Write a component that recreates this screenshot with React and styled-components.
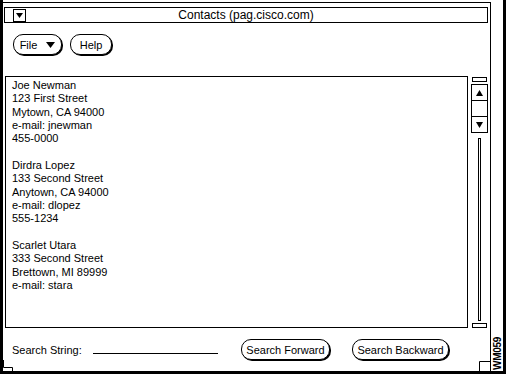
import styled, { createGlobalStyle } from "styled-components";

const GlobalStyle = createGlobalStyle`
  html, body {
    margin: 0;
    padding: 0;
    background: #fff;
  }
  body {
    font-family: "Liberation Sans", Arial, sans-serif;
    color: #000;
  }
`;

const contacts = [
  ["Joe Newman", "123 First Street", "Mytown, CA 94000", "e-mail: jnewman", "455-0000"],
  ["Dirdra Lopez", "133 Second Street", "Anytown, CA 94000", "e-mail: dlopez", "555-1234"],
  ["Scarlet Utara", "333 Second Street", "Brettown, MI 89999", "e-mail: stara"],
];

const Triangle = ({ w = 7, h = 4, up }) => (
  <svg width={w} height={h} viewBox={`0 0 ${w} ${h}`} style={{ display: "block" }}>
    <polygon
      points={up ? `${w / 2},0 ${w},${h} 0,${h}` : `0,0 ${w},0 ${w / 2},${h}`}
      fill="#000"
    />
  </svg>
);

const App = () => {
  return (
    <>
      <GlobalStyle />
      <Frame>
        <Main>
          <TitleBar>
            <MenuBox>
              <Triangle w={7} h={5} />
            </MenuBox>
            <Title>Contacts (pag.cisco.com)</Title>
          </TitleBar>

          <Toolbar>
            <PillButton $w={49}>
              File
              <Triangle w={9} h={6} />
            </PillButton>
            <PillButton $w={42}>Help</PillButton>
          </Toolbar>

          <ContentRow>
            <TextBox>
              {contacts.map((c, i) => (
                <Entry key={i}>
                  {c.map((line) => (
                    <Line key={line}>{line}</Line>
                  ))}
                </Entry>
              ))}
            </TextBox>
            <ScrollBar>
              <Cap />
              <ArrowGroup>
                <ArrowCell>
                  <Triangle up w={7} h={6} />
                </ArrowCell>
                <ArrowCell $empty />
                <ArrowCell>
                  <Triangle w={7} h={6} />
                </ArrowCell>
              </ArrowGroup>
              <Trough />
              <Cap $bottom />
            </ScrollBar>
          </ContentRow>

          <SearchRow>
            <Label>Search String:</Label>
            <Underline />
            <PillButton $w={89} $ml={23}>Search Forward</PillButton>
            <PillButton $w={97} $ml={22}>Search Backward</PillButton>
          </SearchRow>

          <CornerMark $left>
            <svg width="10" height="11" viewBox="0 0 10 11">
              <polyline points="0.5,0 0.5,7.5 9.5,7.5 9.5,11" fill="none" stroke="#000" />
            </svg>
          </CornerMark>
          <CornerMark>
            <svg width="11" height="10" viewBox="0 0 11 10">
              <polyline points="0.5,10 0.5,0.5 11,0.5" fill="none" stroke="#000" />
            </svg>
          </CornerMark>
        </Main>
        <Side>
          <Stamp>WM059</Stamp>
        </Side>
      </Frame>
    </>
  );
};

const Frame = styled.div`
  box-sizing: border-box;
  width: 506px;
  height: 374px;
  display: flex;
  background: #fff;
  border-left: 3px solid #000;
  border-right: 3px solid #000;
  border-bottom: 3px solid #000;
`;

const Main = styled.div`
  position: relative;
  flex: 1;
  display: flex;
  flex-direction: column;
  margin-top: 2px;
  border-top: 1px solid #000;
  border-right: 1px solid #000;
`;

const TitleBar = styled.div`
  box-sizing: border-box;
  height: 16px;
  margin: 4px 2px 0 1px;
  border: 1px solid #000;
  display: grid;
  grid-template-columns: 1fr auto 1fr;
  align-items: center;
`;

const MenuBox = styled.div`
  box-sizing: border-box;
  width: 13px;
  height: 13px;
  margin-left: 8px;
  border: 1px solid #000;
  display: flex;
  align-items: center;
  justify-content: center;
`;

const Title = styled.div`
  font-size: 12px;
  line-height: 14px;
  white-space: nowrap;
`;

const Toolbar = styled.div`
  display: flex;
  gap: 8px;
  padding: 11px 0 0 10px;
`;

const PillButton = styled.div`
  box-sizing: border-box;
  width: ${(p) => p.$w}px;
  height: 21px;
  margin-left: ${(p) => p.$ml || 0}px;
  border: 1px solid #000;
  border-radius: 10px;
  box-shadow: 1px 1px 0 #000;
  background: #fff;
  display: flex;
  align-items: center;
  justify-content: center;
  gap: 9px;
  font-size: 11px;
  white-space: nowrap;
`;

const ContentRow = styled.div`
  display: flex;
  gap: 3px;
  margin-top: 21px;
  padding-left: 2px;
`;

const TextBox = styled.div`
  box-sizing: border-box;
  width: 463px;
  height: 252px;
  border: 1px solid #000;
  padding: 2px 0 0 6px;
  font-size: 11px;
  line-height: 13.33px;
`;

const Entry = styled.div`
  margin-bottom: 13.33px;
`;

const Line = styled.div`
  white-space: nowrap;
`;

const ScrollBar = styled.div`
  width: 17px;
  height: 252px;
  display: flex;
  flex-direction: column;
  align-items: center;
`;

const Cap = styled.div`
  box-sizing: border-box;
  width: 15px;
  height: 5px;
  margin-top: ${(p) => (p.$bottom ? 2 : 1)}px;
  border: 1px solid #000;
`;

const ArrowGroup = styled.div`
  box-sizing: border-box;
  width: 17px;
  margin-top: 2px;
  border: 1px solid #000;
  display: flex;
  flex-direction: column;
`;

const ArrowCell = styled.div`
  height: 15px;
  display: flex;
  align-items: center;
  justify-content: center;
  & + & {
    border-top: 1px solid #000;
  }
`;

const Trough = styled.div`
  box-sizing: border-box;
  flex: 1;
  width: 3px;
  margin-top: 5px;
  border: 1px solid #000;
`;

const SearchRow = styled.div`
  display: flex;
  align-items: center;
  margin-top: 11px;
  padding-left: 9px;
  font-size: 11px;
`;

const Label = styled.div`
  width: 81px;
  white-space: nowrap;
`;

const Underline = styled.div`
  align-self: flex-start;
  width: 125px;
  height: 14px;
  border-bottom: 1px solid #000;
`;

const CornerMark = styled.div`
  position: absolute;
  bottom: 0;
  line-height: 0;
  ${(p) => (p.$left ? "left: 0;" : "right: 0;")}
`;

const Side = styled.div`
  width: 12px;
  display: flex;
  flex-direction: column;
  justify-content: flex-end;
  align-items: flex-end;
`;

const Stamp = styled.div`
  writing-mode: vertical-rl;
  transform: rotate(180deg);
  font-size: 10px;
  font-weight: bold;
  line-height: 10px;
  margin-bottom: 1px;
  letter-spacing: -0.3px;
`;

export default App;
